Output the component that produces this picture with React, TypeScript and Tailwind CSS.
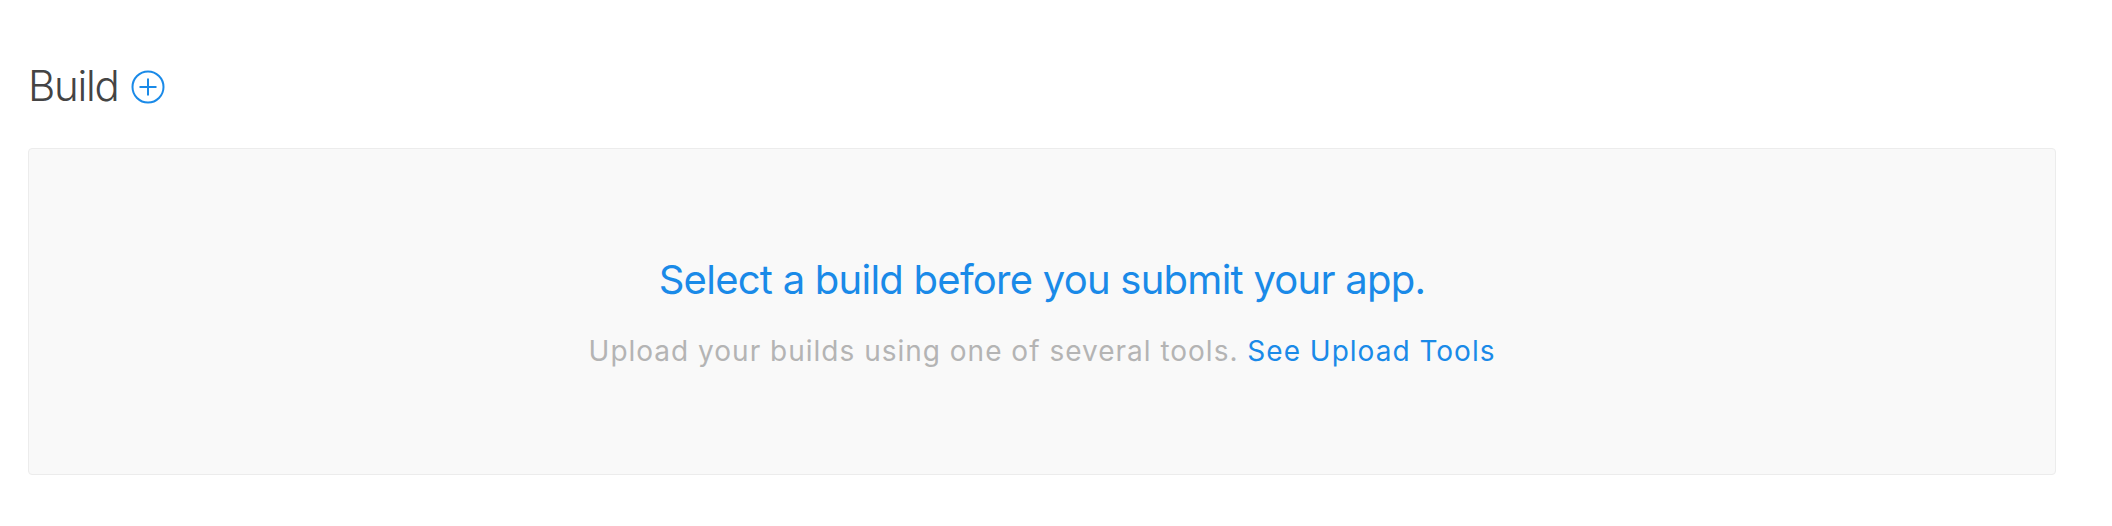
export default function App() {
  return (
    <div
      className="min-h-[526px] bg-white pl-[28px] pr-[56px] pt-[62px]"
      style={{ fontFamily: "Inter, 'Noto Sans', sans-serif" }}
    >
      <div className="flex items-center gap-[13px]">
        <h2 className="text-[42px] leading-[48px] font-light tracking-[-1.3px] text-[#444444]">Build</h2>
        <svg width="34" height="34" viewBox="0 0 34 34" className="mt-[2px]">
          <circle cx="17" cy="17" r="15.5" fill="none" stroke="#1a8ae8" strokeWidth="2" />
          <path d="M17 8.5v17M8.5 17h17" stroke="#1a8ae8" strokeWidth="2" />
        </svg>
      </div>

      <div className="mt-[38px] h-[327px] rounded-[4px] border border-[#ececec] bg-[#f9f9f9] flex flex-col items-center justify-center">
        <p className="text-[40px] leading-[48px] tracking-[-0.75px] text-[#1a8ae8]">
          Select a build before you submit your app.
        </p>
        <p className="mt-[30px] text-[28px] leading-[34px] tracking-[1px] text-[#b4b4b4]">
          Upload your builds using one of several tools.{" "}
          <a href="#" className="text-[#1a8ae8]">
            See Upload Tools
          </a>
        </p>
      </div>
    </div>
  );
}
